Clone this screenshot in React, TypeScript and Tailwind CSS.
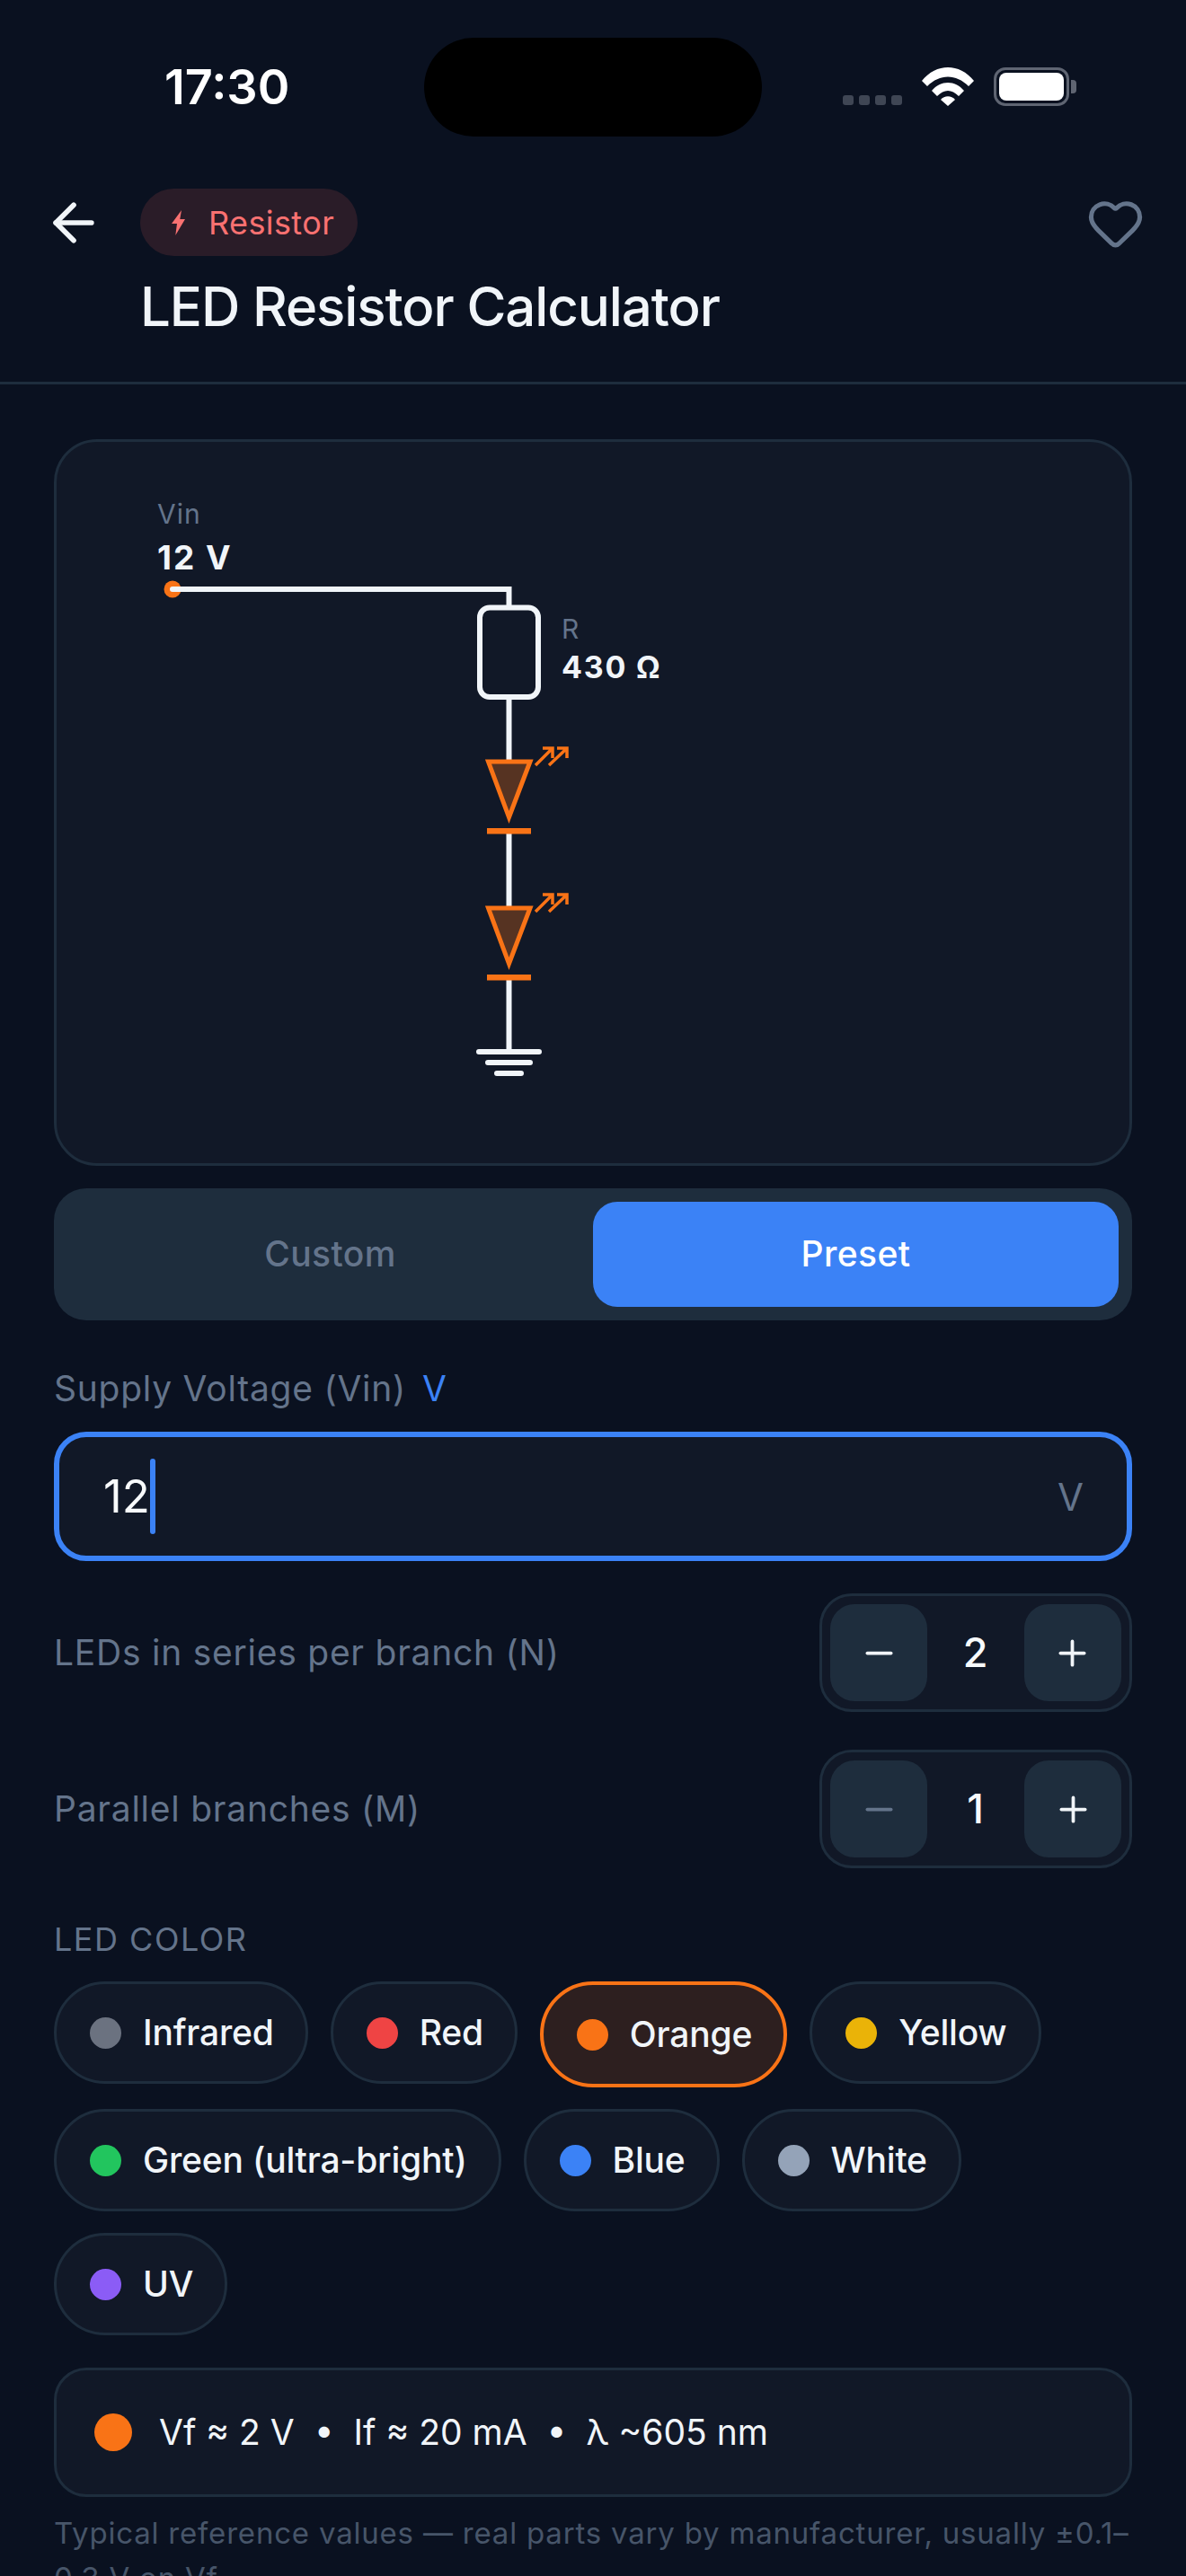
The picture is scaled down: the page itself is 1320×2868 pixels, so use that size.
import React from 'react';
import { ArrowLeft, Heart, Minus, Plus } from 'lucide-react';

const Led: React.FC<{ y: number }> = ({ y }) => (
    <g>
        <path d={`M543.5 ${y} H590 L566.5 ${y + 62} Z`} fill="#f97316" fillOpacity="0.3" stroke="#f97316" strokeWidth="5" />
        <rect x="542" y={y + 74} width="49" height="6.5" fill="#f97316" />
        <path d={`M596 ${y + 4} L614 ${y - 14} M604 ${y - 15} H615 V${y - 4} M611 ${y + 4} L630 ${y - 14} M620 ${y - 15} H631 V${y - 4}`} fill="none" stroke="#f97316" strokeWidth="3.5" />
    </g>
);

// page coordinates, the card's inner box starts at 63,492
const Circuit = () => (
    <svg viewBox="63 492 1194 803" className="block w-full h-full" fontFamily="Inter, sans-serif">
        <text x="175" y="583" fontSize="30" letterSpacing="1" fill="#64748b">Vin</text>
        <text x="175" y="634" fontSize="37" fontWeight="700" letterSpacing="2" fill="#f1f5f9">12 V</text>
        <text x="625" y="711" fontSize="30" fill="#64748b">R</text>
        <text x="625" y="755" fontSize="34" fontWeight="700" letterSpacing="1.8" fill="#f1f5f9">430 Ω</text>
        <circle cx="192" cy="656" r="9.5" fill="#f97316" />
        <path d="M192 656 H566.5 V676 M566.5 776 V846 M566.5 925 V1009 M566.5 1089 V1171" fill="none" stroke="#f1f5f9" strokeWidth="6" strokeLinecap="round" />
        <rect x="534" y="676.5" width="65" height="99.5" rx="11" fill="none" stroke="#f1f5f9" strokeWidth="6" />
        <Led y={848} />
        <Led y={1011} />
        <path d="M533 1171 H600 M543 1183 H590 M553 1195 H580" fill="none" stroke="#f1f5f9" strokeWidth="6" strokeLinecap="round" />
    </svg>
);

const Stepper: React.FC<{ value: number; muted?: boolean }> = ({ value, muted }) => (
    <div className="w-[348px] h-[132px] rounded-[36px] border-[3px] border-[#1e2d3d] bg-[#111827] px-[9px] flex items-center justify-between">
        <button className={`w-[108px] h-[108px] rounded-[27px] bg-[#1e2d3d] flex items-center justify-center ${muted ? 'text-[#64748b]' : 'text-[#f1f5f9]'}`}>
            <Minus size={45} strokeWidth={2} />
        </button>
        <span className="text-[45px] font-medium text-[#f8fafc]">{value}</span>
        <button className="w-[108px] h-[108px] rounded-[27px] bg-[#1e2d3d] flex items-center justify-center text-[#f1f5f9]">
            <Plus size={45} strokeWidth={2} />
        </button>
    </div>
);

const Chip: React.FC<{ label: string; dot: string; active?: boolean }> = ({ label, dot, active }) => (
    <div className={`rounded-full flex items-center gap-[24px] pl-[37px] pr-[35px] text-[39px] font-medium tracking-[-0.2px] text-[#f1f5f9] ${active ? 'h-[118px] border-[4px] border-[#f97316] bg-[#2d1f1f]' : 'h-[114px] border-[3px] border-[#1e2d3d] bg-[#111827]'}`}>
        <span className={`w-[35px] h-[35px] rounded-full ${dot}`}></span>
        {label}
    </div>
);

export default function App() {
    return (
        <div className="w-[1320px] h-[2868px] overflow-hidden bg-[#0a1120] font-['Inter',sans-serif]">
            {/* status bar */}
            <div className="h-[194px] pt-[42px] pl-[183px] pr-[122px] flex items-start">
                <span className="w-[289px] mt-[28px] text-[54px] leading-[54px] font-semibold text-white">17:30</span>
                <div className="w-[376px] h-[110px] rounded-full bg-black"></div>
                <div className="ml-auto flex items-end gap-[22px] mt-[33px]">
                    <div className="flex gap-[6px] mb-[1px]">
                        <span className="w-[12px] h-[11px] rounded-[3px] bg-[#3f4654]"></span>
                        <span className="w-[12px] h-[11px] rounded-[3px] bg-[#3f4654]"></span>
                        <span className="w-[12px] h-[11px] rounded-[3px] bg-[#3f4654]"></span>
                        <span className="w-[12px] h-[11px] rounded-[3px] bg-[#3f4654]"></span>
                    </div>
                    <svg width="58" height="43" viewBox="0 0 58 43">
                        <path d="M0 15 C16 -5 42 -5 58 15 L52 21 C38 7 20 7 6 21 Z M11 26 C21 14 37 14 47 26 L41 32 C33 24 25 24 17 32 Z M21 36 C25 31 33 31 37 36 L29 43 Z" fill="#fff" />
                    </svg>
                    <div className="flex items-center">
                        <div className="w-[84px] h-[43px] rounded-[13px] border-[3px] border-[#5f6572] p-[3px]">
                            <div className="w-full h-full rounded-[8px] bg-white"></div>
                        </div>
                        <span className="w-[6px] h-[15px] rounded-r-[4px] bg-[#5f6572] ml-[2px]"></span>
                    </div>
                </div>
            </div>

            {/* header */}
            <div className="relative h-[234px] pl-[156px] pt-[16px] border-b-[3px] border-[#1e2d3d]">
                <ArrowLeft className="absolute left-[48px] top-[20px] text-[#f1f5f9]" size={68} strokeWidth={2} />
                <Heart className="absolute right-[46px] top-[22px] text-[#64748b]" size={65} strokeWidth={1.9} />
                <div className="w-[242px] h-[75px] rounded-full bg-[#2a1c28] flex items-center pl-[35px] gap-[26px] text-[36px] tracking-[0.4px] text-[#f87171]">
                    <svg width="15" height="28" viewBox="0 0 15 28">
                        <path d="M11 0 L0 15 H6 L4.3 28 L15 10 H9.3 L11 0 Z" fill="#f87171" />
                    </svg>
                    Resistor
                </div>
                <h1 className="mt-[20px] text-[60px] leading-[72px] font-medium tracking-[-1.1px] text-[#f1f5f9]">LED Resistor Calculator</h1>
            </div>

            <div className="px-[60px] pt-[61px]">
                <div className="h-[809px] rounded-[48px] border-[3px] border-[#1e2d3d] bg-[#111827] overflow-hidden">
                    <Circuit />
                </div>

                <div className="mt-[25px] h-[147px] rounded-[36px] bg-[#1e2d3d] p-[15px] flex text-[39px] font-medium tracking-[0.4px]">
                    <div className="flex-1 flex items-center justify-center text-[#64748b]">Custom</div>
                    <div className="flex-1 rounded-[27px] bg-[#3b82f6] flex items-center justify-center text-white">Preset</div>
                </div>

                <div className="mt-[52px] flex gap-[18px] text-[39px] leading-[48px] tracking-[0.75px] text-[#64748b]">
                    Supply Voltage (Vin)
                    <span className="text-[#3b82f6]">V</span>
                </div>

                <div className="mt-[24px] h-[144px] rounded-[36px] border-[6px] border-[#3b82f6] bg-[#111827] pl-[49px] pr-[48px] flex items-center justify-between">
                    <div className="flex items-center">
                        <span className="text-[51px] text-[#f8fafc]">12</span>
                        <span className="w-[6px] h-[84px] rounded-full bg-[#3b82f6]"></span>
                    </div>
                    <span className="text-[42px] text-[#64748b]">V</span>
                </div>

                <div className="mt-[36px] flex items-center justify-between text-[39px] tracking-[0.75px] text-[#64748b]">
                    LEDs in series per branch (N)
                    <Stepper value={2} />
                </div>
                <div className="mt-[42px] flex items-center justify-between text-[39px] tracking-[0.75px] text-[#64748b]">
                    Parallel branches (M)
                    <Stepper value={1} muted />
                </div>

                <div className="mt-[57px] text-[36px] leading-[44px] tracking-[1.5px] text-[#64748b]">LED COLOR</div>

                <div className="mt-[25px] flex flex-wrap items-start gap-x-[25px] gap-y-[24px]">
                    <Chip label="Infrared" dot="bg-[#6b7280]" />
                    <Chip label="Red" dot="bg-[#ef4444]" />
                    <Chip label="Orange" dot="bg-[#f97316]" active />
                    <Chip label="Yellow" dot="bg-[#eab308]" />
                    <Chip label="Green (ultra-bright)" dot="bg-[#22c55e]" />
                    <Chip label="Blue" dot="bg-[#3b82f6]" />
                    <Chip label="White" dot="bg-[#94a3b8]" />
                    <Chip label="UV" dot="bg-[#8b5cf6]" />
                </div>

                <div className="mt-[36px] h-[144px] rounded-[36px] border-[3px] border-[#1e2d3d] bg-[#111827] pl-[42px] flex items-center gap-[30px] text-[39px] text-[#f1f5f9]">
                    <span className="w-[42px] h-[42px] rounded-full bg-[#f97316]"></span>
                    <span className="whitespace-pre">{'Vf ≈ 2 V  •  If ≈ 20 mA  •  λ ~605 nm'}</span>
                </div>

                <p className="mt-[15px] text-[33px] leading-[50px] tracking-[0.8px] text-[#475569]">
                    Typical reference values — real parts vary by manufacturer, usually ±0.1–0.3 V on Vf.
                </p>
            </div>
        </div>
    );
}
